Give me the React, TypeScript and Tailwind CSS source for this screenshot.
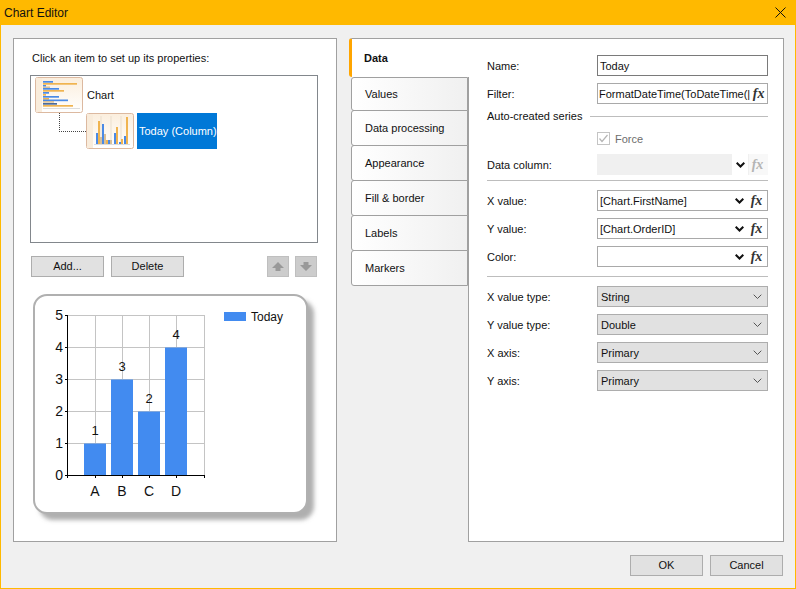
import { ReactNode } from "react";

function Btn({ label, className = "" }: { label: string; className?: string }) {
  return (
    <div className={`h-[21px] w-[73px] flex items-center justify-center bg-[#e1e1e1] border border-[#adadad] ${className}`}>
      {label}
    </div>
  );
}

function Fx({ disabled }: { disabled?: boolean }) {
  return (
    <span className={`w-[19px] shrink-0 flex items-center justify-center pr-[2px] [font-family:Liberation_Serif,serif] italic font-bold text-[14px] leading-none ${disabled ? "text-[#b4b4b4]" : "text-[#333]"}`}>
      fx
    </span>
  );
}

function Chevron({ thin }: { thin?: boolean }) {
  return (
    <svg width="9" height="6" viewBox="0 0 9 6" className="shrink-0">
      <polyline
        points="0.7,0.7 4.5,4.5 8.3,0.7"
        fill="none"
        stroke={thin ? "#555" : "#111"}
        strokeWidth={thin ? 1 : 2}
      />
    </svg>
  );
}

function Row({ label, children, className = "" }: { label: string; children: ReactNode; className?: string }) {
  return (
    <div className={`flex items-center h-[21px] ${className}`}>
      <span className="w-[110px] shrink-0 pt-[2px]">{label}</span>
      {children}
    </div>
  );
}

function ComboField({ value }: { value: string }) {
  return (
    <div className="flex-1 min-w-0 h-[21px] flex items-center border border-[#a9a9a9] bg-white pl-[2px]">
      <span className="flex-1 whitespace-nowrap pt-[2px]">{value}</span>
      <Chevron />
      <span className="w-[4px]" />
      <Fx />
    </div>
  );
}

function SelectField({ value }: { value: string }) {
  return (
    <div className="flex-1 h-[21px] flex items-center justify-between border border-[#adadad] bg-[#e1e1e1] pl-[3px] pr-[5px]">
      <span className="pt-[2px]">{value}</span>
      <Chevron thin />
    </div>
  );
}

function ChartThumb() {
  const bars: [number, number, string][] = [
    [4, 10, "#4a8ae6"], [6, 34, "#f0b450"], [8, 3, "#4a8ae6"], [9.5, 7, "#d8c09a"],
    [11, 16, "#4a8ae6"], [13, 21, "#f0b450"], [15, 6, "#4a8ae6"], [17, 3, "#f0b450"],
    [19, 16, "#4a8ae6"], [21, 6, "#f0b450"], [22.5, 25, "#4a8ae6"], [24, 11, "#d8c09a"],
    [26, 14, "#4a6a9a"], [28, 30, "#f0b450"],
  ];
  return (
    <svg width="48" height="36" viewBox="0 0 48 36" className="shrink-0">
      <defs>
        <linearGradient id="tg1" x1="0" y1="0" x2="0" y2="1">
          <stop offset="0" stopColor="#fbeedd" />
          <stop offset="1" stopColor="#ffffff" />
        </linearGradient>
      </defs>
      <rect x="0.5" y="0.5" width="47" height="35" rx="2" fill="url(#tg1)" stroke="#dcb9a0" />
      <rect x="1" y="1" width="6" height="34" fill="#f9ecdb" />
      {bars.map(([y, w, c], i) => (
        <rect key={i} x="8" y={y} width={w} height="1.7" fill={c} />
      ))}
      <line x1="8" y1="31.5" x2="45" y2="31.5" stroke="#ddd" />
    </svg>
  );
}

function ColumnThumb() {
  const bars: [number, number, number, string][] = [
    [10, 20, 11, "#4a8ae6"], [12, 8, 23, "#f0b450"], [14, 24, 7, "#d8c09a"], [16, 11, 20, "#4a8ae6"],
    [18, 21, 10, "#d8c09a"], [20, 27, 4, "#f0b450"], [22, 27, 4, "#4a8ae6"], [24, 27, 4, "#d8c09a"],
    [28, 20, 11, "#4a8ae6"], [30, 14, 17, "#f0b450"], [33, 29, 2, "#4a8ae6"], [35, 26, 5, "#f0b450"],
    [38, 23, 8, "#4a8ae6"], [40, 4, 27, "#f0b450"],
  ];
  return (
    <svg width="48" height="36" viewBox="0 0 48 36" className="shrink-0">
      <defs>
        <linearGradient id="tg2" x1="0" y1="0" x2="0" y2="1">
          <stop offset="0" stopColor="#fbeedd" />
          <stop offset="1" stopColor="#ffffff" />
        </linearGradient>
      </defs>
      <rect x="0.5" y="0.5" width="47" height="35" rx="2" fill="url(#tg2)" stroke="#dcb9a0" />
      <rect x="1" y="1" width="6" height="34" fill="#f9ecdb" />
      {[15, 25, 35].map((x) => (
        <line key={x} x1={x} y1="3" x2={x} y2="31" stroke="#eadfce" />
      ))}
      {bars.map(([x, y, h, c], i) => (
        <rect key={i} x={x} y={y} width="2" height={h} fill={c} />
      ))}
      <line x1="8" y1="31.5" x2="44" y2="31.5" stroke="#ddd" />
    </svg>
  );
}

function ArrowBtn({ up }: { up?: boolean }) {
  return (
    <div className="w-[22px] h-[21px] flex items-center justify-center bg-[#cccccc] border border-[#bfbfbf]">
      <svg width="12" height="9" viewBox="0 0 12 9">
        <polygon
          points={up ? "6,0 12,6 8.5,6 8.5,9 3.5,9 3.5,6 0,6" : "3.5,0 8.5,0 8.5,3 12,3 6,9 0,3 3.5,3"}
          fill="#999999"
        />
      </svg>
    </div>
  );
}

function PreviewChart() {
  const bars = [
    { label: "A", v: 1, x: 51 },
    { label: "B", v: 3, x: 78 },
    { label: "C", v: 2, x: 105 },
    { label: "D", v: 4, x: 132 },
  ];
  const ys = [0, 1, 2, 3, 4, 5];
  const yFor = (v: number) => 179 - v * 32;
  return (
    <svg width="271" height="216" viewBox="2 0 271 216">
      {ys.slice(1).map((v) => (
        <line key={v} x1="34" x2="171" y1={yFor(v) + 0.5} y2={yFor(v) + 0.5} stroke="#c4c4c4" />
      ))}
      {[62, 89, 116, 143, 171].map((x) => (
        <line key={x} x1={x + 0.5} x2={x + 0.5} y1="19" y2="179" stroke="#c4c4c4" />
      ))}
      {bars.map((b) => (
        <g key={b.label}>
          <rect x={b.x} y={yFor(b.v) + 0.5} width="22" height={b.v * 32} fill="#428bf0" />
          <text x={b.x + 11} y={yFor(b.v) - 8} textAnchor="middle" fontSize="13" fill="#111">{b.v}</text>
          <text x={b.x + 11} y="200" textAnchor="middle" fontSize="14" fill="#111">{b.label}</text>
        </g>
      ))}
      <line x1="34.5" x2="34.5" y1="19" y2="180" stroke="#000" />
      <line x1="33" x2="172" y1="179.5" y2="179.5" stroke="#000" />
      {ys.map((v) => (
        <g key={v}>
          <line x1="32" x2="34" y1={yFor(v) + 0.5} y2={yFor(v) + 0.5} stroke="#000" />
          <text x="30" y={yFor(v) + 5} textAnchor="end" fontSize="14" fill="#111">{v}</text>
        </g>
      ))}
      {[34, 62, 89, 116, 143, 171].map((x) => (
        <line key={x} x1={x + 0.5} x2={x + 0.5} y1="180" y2="182" stroke="#000" />
      ))}
      <rect x="191" y="16" width="22" height="9" fill="#428bf0" />
      <text x="218" y="25" fontSize="12" fill="#111">Today</text>
    </svg>
  );
}

const TABS = ["Values", "Data processing", "Appearance", "Fill & border", "Labels", "Markers"];

export default function App() {
  return (
    <div className="w-[796px] h-[589px] flex flex-col overflow-hidden bg-[#f0f0f0] border-x border-b border-[#ffb900] text-[11px] leading-none text-[#111] [font-family:Liberation_Sans,sans-serif]">
      {/* title bar */}
      <div className="h-[25px] -mx-px shrink-0 flex items-center justify-between bg-[#ffb900] pl-[4px] pr-[10px] text-[12px]">
        <span>Chart Editor</span>
        <svg width="11" height="11" viewBox="0 0 11 11">
          <path d="M0.5 0.5 L10.5 10.5 M10.5 0.5 L0.5 10.5" stroke="#111" strokeWidth="1" />
        </svg>
      </div>

      <div className="flex pl-[12px] pt-[13px]">
        {/* left panel */}
        <div className="w-[324px] h-[504px] shrink-0 bg-white border border-[#a0a0a0] pl-[16px] pr-[18px]">
          <div className="pl-[2px] pt-[14px] h-[36px]">Click an item to set up its properties:</div>
          <div className="h-[168px] border border-[#82878c] bg-white pl-[4px] pt-[1px]">
            <div className="flex items-center h-[36px]">
              <ChartThumb />
              <span className="ml-[4px]">Chart</span>
            </div>
            <div className="flex h-[36px]">
              <div className="ml-[24px] w-[27px] h-[19px] border-l border-b border-dotted border-[#444]" />
              <ColumnThumb />
              <div className="ml-[3px] w-[80px] bg-[#0078d7] text-white flex items-center pl-[2px] whitespace-nowrap">Today (Column)</div>
            </div>
          </div>
          <div className="flex mt-[13px] pl-[1px] pr-[1px]">
            <Btn label="Add..." />
            <Btn label="Delete" className="ml-[7px]" />
            <div className="ml-auto flex gap-[6px]">
              <ArrowBtn up />
              <ArrowBtn />
            </div>
          </div>
          {/* preview */}
          <div className="mt-[17px] ml-[3px] w-[275px] h-[220px] rounded-[14px] bg-white border-2 border-[#b0b0b0] shadow-[6px_6px_4px_rgba(110,110,110,0.55)]">
            <PreviewChart />
          </div>
        </div>

        {/* tabs + panel */}
        <div className="flex ml-[12px]">
          <div className="w-[119px] shrink-0 flex flex-col">
            <div className="h-[39px] w-[121px] z-10 flex items-center pl-[12px] font-bold bg-white border-t border-[#a0a0a0] border-l-[3px] border-l-[#ffa500] rounded-tl-[3px] rounded-bl-[3px]">
              Data
            </div>
            <div className="ml-[2px]">
              {TABS.map((t) => (
                <div
                  key={t}
                  className="h-[36px] first:h-[34px] -mb-px flex items-center pl-[13px] bg-gradient-to-r from-white to-[#f0f0f0] border border-[#a0a0a0] rounded-l-[3px]"
                >
                  {t}
                </div>
              ))}
            </div>
          </div>

          <div className="w-[316px] h-[504px] shrink-0 bg-white border border-[#a0a0a0] pl-[18px] pr-[15px] pt-[16px]">
            <Row label="Name:">
              <div className="flex-1 h-[21px] flex items-center border border-[#7a7a7a] pl-[2px]">
                <span className="pt-[2px]">Today</span>
              </div>
            </Row>
            <Row label="Filter:" className="mt-[7px]">
              <div className="flex-1 min-w-0 h-[21px] flex items-center border border-[#a9a9a9] pl-[1px]">
                <span className="flex-1 whitespace-nowrap pt-[2px]">FormatDateTime(ToDateTime(|</span>
                <Fx />
              </div>
            </Row>
            <div className="flex items-center mt-[5px] h-[14px]">
              <span>Auto-created series</span>
              <span className="flex-1 ml-[8px] border-t border-[#bdbdbd]" />
            </div>
            <div className="flex items-center h-[13px] mt-[9px] pl-[110px] text-[#6d6d6d]">
              <svg width="13" height="13" viewBox="0 0 13 13" className="shrink-0">
                <rect x="0.5" y="0.5" width="12" height="12" fill="#fff" stroke="#c4c4c4" />
                <polyline points="2.5,6.5 5,9.5 10.5,3" fill="none" stroke="#b5b5b5" strokeWidth="1.2" />
              </svg>
              <span className="ml-[5px] pt-[2px]">Force</span>
            </div>
            <Row label="Data column:" className="mt-[9px]">
              <div className="flex-1 h-[21px] flex items-center bg-[#f0f0f0]">
                <span className="flex-1" />
                <span className="w-[16px] h-full bg-white flex items-center justify-center">
                  <Chevron />
                </span>
                <span className="ml-px h-full flex bg-[#f8f8f8]">
                  <Fx disabled />
                </span>
              </div>
            </Row>
            <div className="mt-[5px] border-t border-[#bdbdbd]" />
            <Row label="X value:" className="mt-[9px]">
              <ComboField value="[Chart.FirstName]" />
            </Row>
            <Row label="Y value:" className="mt-[7px]">
              <ComboField value="[Chart.OrderID]" />
            </Row>
            <Row label="Color:" className="mt-[7px]">
              <ComboField value="" />
            </Row>
            <div className="mt-[9px] border-t border-[#bdbdbd]" />
            <Row label="X value type:" className="mt-[9px]">
              <SelectField value="String" />
            </Row>
            <Row label="Y value type:" className="mt-[7px]">
              <SelectField value="Double" />
            </Row>
            <Row label="X axis:" className="mt-[7px]">
              <SelectField value="Primary" />
            </Row>
            <Row label="Y axis:" className="mt-[7px]">
              <SelectField value="Primary" />
            </Row>
          </div>
        </div>
      </div>

      {/* footer */}
      <div className="flex justify-end gap-[7px] pr-[12px] mt-[13px]">
        <Btn label="OK" />
        <Btn label="Cancel" />
      </div>
    </div>
  );
}
